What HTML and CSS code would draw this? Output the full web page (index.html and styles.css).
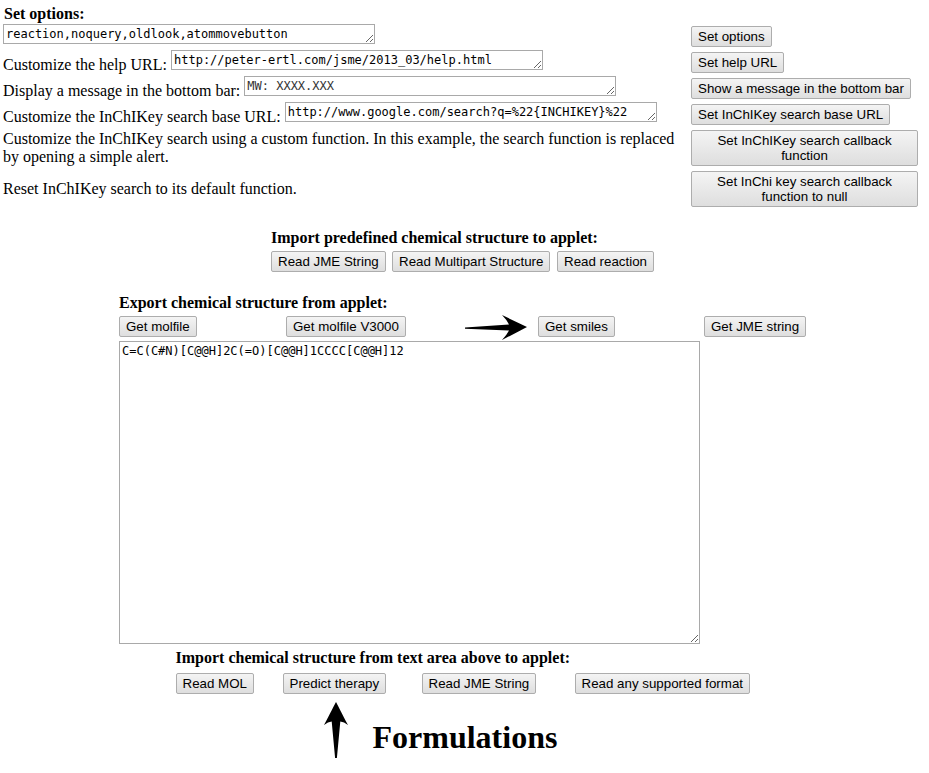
FILE: index.html
```html
<!DOCTYPE html>
<html>
<head>
<meta charset="utf-8">
<title>JSME options</title>
<link rel="stylesheet" href="styles.css">
</head>
<body>
<div class="page">
  <div class="heading">Set options:</div>
  <div class="opts">
    <div class="cell"><textarea class="field">reaction,noquery,oldlook,atommovebutton</textarea></div>
    <div class="bcell"><button class="btn">Set options</button></div>

    <div class="cell">Customize the help URL: <textarea class="field">http://peter-ertl.com/jsme/2013_03/help.html</textarea></div>
    <div class="bcell"><button class="btn">Set help URL</button></div>

    <div class="cell">Display a message in the bottom bar: <textarea class="field field-soft">MW: XXXX.XXX</textarea></div>
    <div class="bcell"><button class="btn">Show a message in the bottom bar</button></div>

    <div class="cell">Customize the InChIKey search base URL: <textarea class="field">http://www.google.com/search?q=%22{INCHIKEY}%22</textarea></div>
    <div class="bcell"><button class="btn">Set InChIKey search base URL</button></div>

    <div class="cell">Customize the InChIKey search using a custom function. In this example, the search function is replaced by opening a simple alert.</div>
    <div class="bcell"><button class="btn btn-wide">Set InChIKey search callback function</button></div>

    <div class="cell">Reset InChIKey search to its default function.</div>
    <div class="bcell"><button class="btn btn-wide">Set InChi key search callback function to null</button></div>
  </div>

  <div class="center">
    <div class="block block-import1">
      <div class="heading">Import predefined chemical structure to applet:</div>
      <div class="row row-import1">
        <div><button class="btn">Read JME String</button></div>
        <div><button class="btn">Read Multipart Structure</button></div>
        <div><button class="btn">Read reaction</button></div>
      </div>
    </div>
  </div>

  <div class="center">
    <div class="block block-export">
      <div class="heading">Export chemical structure from applet:</div>
      <div class="row row-export">
        <div><button class="btn">Get molfile</button></div>
        <div><button class="btn">Get molfile V3000</button></div>
        <div class="arrowcell">
          <svg class="arrow-right" width="62" height="25" viewBox="0 0 62 25" aria-hidden="true">
            <path d="M0,12.6 L44,9.6 Q41.5,4.5 37,0 L62,12 L37,25 Q41.5,20.5 44,15.6 L0,13.8 Z" fill="#000"/>
          </svg>
          <button class="btn">Get smiles</button>
        </div>
        <div><button class="btn">Get JME string</button></div>
      </div>
      <textarea class="bigarea">C=C(C#N)[C@@H]2C(=O)[C@@H]1CCCC[C@@H]12</textarea>
    </div>
  </div>

  <div class="center">
    <div class="block block-import2">
      <div class="heading">Import chemical structure from text area above to applet:</div>
      <div class="row row-import2">
        <div><button class="btn">Read MOL</button></div>
        <div><button class="btn">Predict therapy</button></div>
        <div><button class="btn">Read JME String</button></div>
        <div><button class="btn">Read any supported format</button></div>
      </div>
      <div class="formulations">
        <svg class="arrow-up" width="24" height="56" viewBox="0 0 24 56" aria-hidden="true">
          <path d="M12,0 C13,1.5 18,12 24,23 Q20,19.5 16.3,19.5 L12.9,56 L11.1,56 L7.7,19.5 Q4,19.5 0,23 C6,12 11,1.5 12,0 Z" fill="#000"/>
        </svg>
        <div class="big">Formulations</div>
      </div>
    </div>
  </div>
</div>
</body>
</html>
```

FILE: styles.css
```css
html, body {
  margin: 0;
  padding: 0;
  background: #fff;
}

body {
  font-family: "Liberation Serif", "Times New Roman", serif;
  font-size: 16px;
  color: #000;
}

.page {
  padding-top: 5px;
  width: 929px;
}

.heading {
  font-weight: bold;
  line-height: 18px;
}

.page > .heading {
  padding-left: 4px;
}

.opts {
  display: grid;
  grid-template-columns: 688px 227px;
  grid-template-rows: 22px 22px 22px 22px 38px 36px;
  column-gap: 3px;
  row-gap: 4px;
  align-items: center;
  margin-top: 2px;
}

.cell {
  padding-left: 3px;
  line-height: 18px;
}

.bcell {
  display: flex;
  align-items: center;
}

.field {
  box-sizing: border-box;
  width: 372px;
  height: 20px;
  margin: 0;
  padding: 2px;
  border: 1px solid #a9a9a9;
  font-family: "DejaVu Sans Mono", "Liberation Mono", monospace;
  font-size: 12px;
  line-height: 14px;
  color: #000;
  vertical-align: baseline;
  background: #fff;
}

.field-soft {
  color: #333;
}

.btn {
  font-family: "Liberation Sans", Arial, sans-serif;
  font-size: 13.33px;
  line-height: 15px;
  padding: 2px 6px;
  margin: 0;
  border: 1px solid #adadad;
  border-radius: 2px;
  background: linear-gradient(#f4f4f4, #dedede);
  color: #000;
  text-align: center;
}

.btn-wide {
  width: 227px;
}

.center {
  display: flex;
  justify-content: center;
  padding-right: 2px;
}

.block {
  display: flex;
  flex-direction: column;
  align-items: flex-start;
}

.block-import1 {
  margin-top: 22px;
}

.row {
  display: grid;
  justify-items: start;
  margin-top: 4px;
}

.row-import1 {
  grid-template-columns: 121px 165px 99px;
}

.block-export {
  margin-top: 22px;
}

.row-export {
  grid-template-columns: 167px 179px 239px 104px;
  align-items: center;
}

.arrowcell {
  display: flex;
  align-items: center;
  gap: 11px;
}

.arrow-right {
  display: block;
  margin: -1px 0 -3px;
}

.bigarea {
  display: block;
  box-sizing: border-box;
  width: 581px;
  height: 303px;
  margin: 4px 0 0 0;
  padding: 2px;
  border: 1px solid #a9a9a9;
  font-family: "DejaVu Sans Mono", "Liberation Mono", monospace;
  font-size: 12px;
  line-height: 14px;
  color: #000;
  background: #fff;
}

.block-import2 {
  margin-top: 5px;
}

.row-import2 {
  grid-template-columns: 107px 139px 153px 177px;
  margin-top: 6px;
}

.formulations {
  display: flex;
  align-items: flex-start;
  gap: 25px;
  margin-top: 8px;
  padding-left: 148px;
}

.arrow-up {
  display: block;
}

.big {
  font-weight: bold;
  font-size: 32px;
  line-height: 36px;
  margin-top: 17px;
}
```
